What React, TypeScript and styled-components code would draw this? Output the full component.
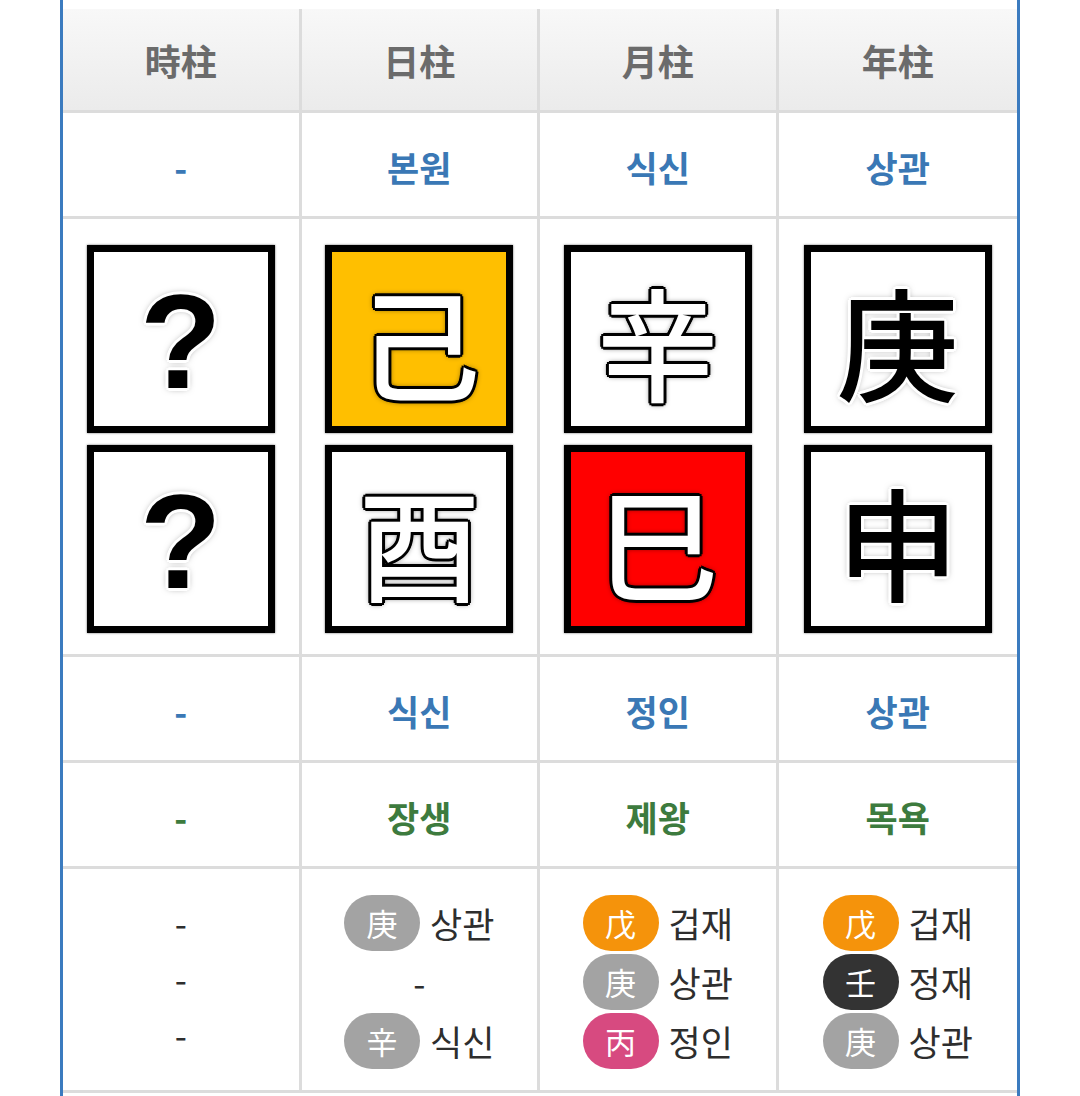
import React from "react";
import styled, { createGlobalStyle, css } from "styled-components";

const GlobalStyle = createGlobalStyle`
  body {
    margin: 0;
    background: #fff;
    font-family: "Noto Sans CJK KR", "Noto Sans", sans-serif;
  }
`;

const Page = styled.div`
  margin: 0 60px;
  padding-top: 9px;
  border-left: 3px solid #3b7bbf;
  border-right: 3px solid #3b7bbf;
  min-height: 1200px;
`;

const Grid = styled.div`
  display: grid;
  grid-template-columns: repeat(4, 1fr);
`;

const Cell = styled.div<{ $last?: boolean; $h?: number }>`
  display: flex;
  flex-direction: column;
  align-items: center;
  justify-content: center;
  box-sizing: border-box;
  height: ${(p) => (p.$h ? `${p.$h}px` : "auto")};
  border-bottom: 3px solid #dcdcdc;
  border-right: ${(p) => (p.$last ? "none" : "3px solid #dcdcdc")};
`;

const HeadCell = styled(Cell)`
  background: linear-gradient(#f8f8f8, #ebebeb);
  color: #6b6b6b;
  font-size: 36px;
  font-weight: 700;
`;

const Label = styled(Cell)<{ $tone: "blue" | "green" }>`
  color: ${(p) => (p.$tone === "blue" ? "#3a78b5" : "#3d7b3e")};
  font-size: 35px;
  font-weight: 700;
  padding-top: 3px;
`;

const CharCell = styled(Cell)`
  gap: 12px;
  padding-top: 4px;
`;

const whiteGlyph = css`
  color: #fff;
  text-shadow: -3px 0 #000, 3px 0 #000, 0 -3px #000, 0 3px #000,
    -2px -2px #000, 2px 2px #000, -2px 2px #000, 2px -2px #000,
    0 0 6px #000;
`;

const blackGlyph = css`
  color: #000;
  text-shadow: -3px 0 #fff, 3px 0 #fff, 0 -3px #fff, 0 3px #fff,
    -2px -2px #fff, 2px 2px #fff, -2px 2px #fff, 2px -2px #fff,
    0 0 7px #777;
`;

const CharBox = styled.div<{ $bg: string; $ink: "white" | "black"; $q?: boolean }>`
  width: 188px;
  height: 188px;
  box-sizing: border-box;
  border: 7px solid #000;
  box-shadow: 0 0 2px rgba(0, 0, 0, 0.6);
  background: ${(p) => p.$bg};
  display: flex;
  align-items: center;
  justify-content: center;
  padding-top: ${(p) => (p.$q ? "6px" : "0")};
  font-size: ${(p) => (p.$q ? "134px" : "122px")};
  font-family: ${(p) =>
    p.$q ? `"Liberation Sans", Arial, sans-serif` : `"Noto Sans CJK KR", "Noto Sans CJK SC", sans-serif`};
  font-weight: ${(p) => (p.$q ? 700 : 500)};
  line-height: 1;
  ${(p) => (p.$ink === "white" ? whiteGlyph : blackGlyph)}
`;

const HiddenCell = styled(Cell)`
  justify-content: flex-start;
  padding: 24px 0 20px;
  color: #2e2e2e;
`;

const Line = styled.div<{ $plain?: boolean }>`
  display: flex;
  align-items: center;
  justify-content: center;
  gap: 10px;
  height: ${(p) => (p.$plain ? "56px" : "59px")};
  font-size: 35px;
`;

const Badge = styled.span<{ $color: string }>`
  width: 76px;
  height: 56px;
  border-radius: 28px;
  background: ${(p) => p.$color};
  color: #fff;
  font-size: 31px;
  display: flex;
  align-items: center;
  justify-content: center;
`;

const GRAY = "#a3a3a3";
const ORANGE = "#f5930b";
const PINK = "#d74a80";
const DARK = "#333333";

type Hidden = { stem: string; color: string; name: string } | null;

const columns = [
  {
    head: "時柱",
    top: "-",
    stem: { ch: "?", bg: "#fff", ink: "black" as const, q: true },
    branch: { ch: "?", bg: "#fff", ink: "black" as const, q: true },
    god: "-",
    stage: "-",
    hidden: [] as Hidden[],
  },
  {
    head: "日柱",
    top: "본원",
    stem: { ch: "己", bg: "#ffbf00", ink: "white" as const },
    branch: { ch: "酉", bg: "#fff", ink: "white" as const },
    god: "식신",
    stage: "장생",
    hidden: [
      { stem: "庚", color: GRAY, name: "상관" },
      null,
      { stem: "辛", color: GRAY, name: "식신" },
    ],
  },
  {
    head: "月柱",
    top: "식신",
    stem: { ch: "辛", bg: "#fff", ink: "white" as const },
    branch: { ch: "巳", bg: "#ff0000", ink: "white" as const },
    god: "정인",
    stage: "제왕",
    hidden: [
      { stem: "戊", color: ORANGE, name: "겁재" },
      { stem: "庚", color: GRAY, name: "상관" },
      { stem: "丙", color: PINK, name: "정인" },
    ],
  },
  {
    head: "年柱",
    top: "상관",
    stem: { ch: "庚", bg: "#fff", ink: "black" as const },
    branch: { ch: "申", bg: "#fff", ink: "black" as const },
    god: "상관",
    stage: "목욕",
    hidden: [
      { stem: "戊", color: ORANGE, name: "겁재" },
      { stem: "壬", color: DARK, name: "정재" },
      { stem: "庚", color: GRAY, name: "상관" },
    ],
  },
];

export default function App() {
  return (
    <>
      <GlobalStyle />
      <Page>
        <Grid>
          {columns.map((c, i) => (
            <HeadCell key={c.head} $h={104} $last={i === 3}>
              {c.head}
            </HeadCell>
          ))}
          {columns.map((c, i) => (
            <Label key={"t" + i} $h={106} $tone="blue" $last={i === 3}>
              {c.top}
            </Label>
          ))}
          {columns.map((c, i) => (
            <CharCell key={"c" + i} $h={438} $last={i === 3}>
              <CharBox $bg={c.stem.bg} $ink={c.stem.ink} $q={"q" in c.stem}>
                {c.stem.ch}
              </CharBox>
              <CharBox $bg={c.branch.bg} $ink={c.branch.ink} $q={"q" in c.branch}>
                {c.branch.ch}
              </CharBox>
            </CharCell>
          ))}
          {columns.map((c, i) => (
            <Label key={"g" + i} $h={106} $tone="blue" $last={i === 3}>
              {c.god}
            </Label>
          ))}
          {columns.map((c, i) => (
            <Label key={"s" + i} $h={106} $tone="green" $last={i === 3}>
              {c.stage}
            </Label>
          ))}
          {columns.map((c, i) => (
            <HiddenCell key={"h" + i} $last={i === 3}>
              {c.hidden.length === 0
                ? ["a", "b", "c"].map((k) => (
                    <Line key={k} $plain>
                      -
                    </Line>
                  ))
                : c.hidden.map((h, j) =>
                    h ? (
                      <Line key={j}>
                        <Badge $color={h.color}>{h.stem}</Badge>
                        {h.name}
                      </Line>
                    ) : (
                      <Line key={j}>-</Line>
                    )
                  )}
            </HiddenCell>
          ))}
        </Grid>
      </Page>
    </>
  );
}
